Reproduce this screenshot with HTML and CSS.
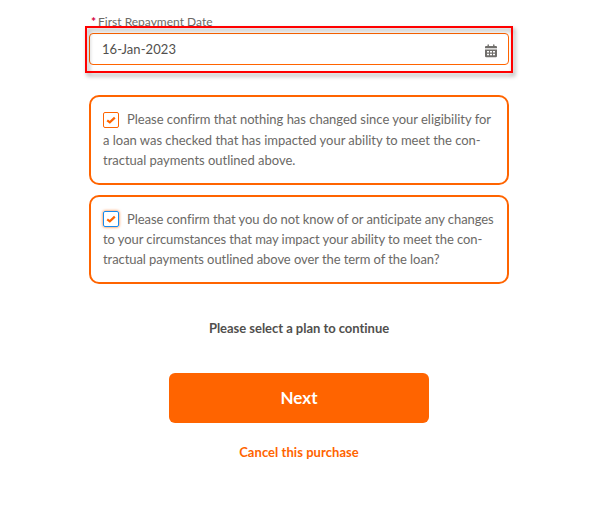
FILE: index.html
```html
<!DOCTYPE html>
<html lang="en">
<head>
<meta charset="utf-8">
<title>Loan confirmation</title>
<link rel="stylesheet" href="styles.css">
</head>
<body>
<main class="form">
  <div class="field">
    <label class="field-label" for="date"><span class="required">*</span><span>First Repayment Date</span></label>
    <div class="date-input" id="date">
      <span>16-Jan-2023</span>
      <svg class="calendar" width="12" height="14" viewBox="0 0 12 14">
        <path fill="#706e6b" d="M1 2h1.500v-1q0-.7.7-.7t.7.700v1h4.200v-1q0-.7.7-.7t.7.700v1H11q1 0 1 1v1.200H0V3q0-1 1-1zM0 5.400h12v6.600q0 1.200-1.200 1.200H1.200Q0 13.200 0 12z"/>
        <path fill="#fff" d="M2 7h2v1.500H2zM5 7h2v1.500H5zM8 7h2v1.500H8zM2 9.800h2v1.500H2zM5 9.800h2v1.500H5zM8 9.800h2v1.500H8z"/>
      </svg>
    </div>
    <div class="highlight"></div>
  </div>

  <label class="card card-first">
    <span class="line"><span class="box"><svg width="10" height="8" viewBox="0 0 10 8"><path d="M1.200 4.300 3.800 6.300 8.800 1.600" fill="none" stroke="#ff6400" stroke-width="2.200"/></svg></span><span>Please confirm that nothing has changed since your eligibility for</span></span>
    <span class="line"><span>a loan was checked that has impacted your ability to meet the con-</span></span>
    <span class="line"><span>tractual payments outlined above.</span></span>
  </label>

  <label class="card card-second">
    <span class="line"><span class="box focused"><svg width="10" height="8" viewBox="0 0 10 8"><path d="M1.200 4.300 3.800 6.300 8.800 1.600" fill="none" stroke="#ff6400" stroke-width="2.200"/></svg></span><span>Please confirm that you do not know of or anticipate any changes</span></span>
    <span class="line"><span>to your circumstances that may impact your ability to meet the con-</span></span>
    <span class="line"><span>tractual payments outlined above over the term of the loan?</span></span>
  </label>

  <p class="prompt">Please select a plan to continue</p>
  <button class="next" type="button">Next</button>
  <a class="cancel">Cancel this purchase</a>
</main>
</body>
</html>
```
FILE: styles.css
```css
* { box-sizing: border-box; }
body {
  margin: 0;
  background: #fff;
  font: 13px/20px Lato, sans-serif;
  font-variant-ligatures: none;
  color: #6b6966;
}
.form {
  display: flex;
  flex-direction: column;
  width: 420px;
  margin-left: 89px;
  padding-top: 12px;
}
.field { position: relative; }
.field-label {
  display: flex;
  gap: 2px;
  height: 21px;
  padding-left: 2px;
  font-size: 12px;
  line-height: 20px;
}
.required {
  color: #d6003c;
  font-weight: 700;
}
.date-input {
  display: flex;
  align-items: center;
  justify-content: space-between;
  height: 32px;
  padding: 0 11px 0 12px;
  border: 1px solid #ff6400;
  border-radius: 4px;
  background: #fff;
  font-size: 13px;
  letter-spacing: .08px;
  color: #514f4d;
}
.calendar { margin-top: 3px; }
.highlight {
  position: absolute;
  left: -4px;
  right: -4px;
  top: 14px;
  height: 47px;
  border: 2px solid #f00;
  filter: drop-shadow(2px 3px 2px rgba(0, 0, 0, .4));
}
.card {
  border: 2px solid #ff6400;
  border-radius: 10px;
  padding: 12px;
}
.card-first {
  height: 90px;
  margin-top: 30px;
  padding-top: 11px;
  letter-spacing: -.02px;
}
.card-second {
  height: 89px;
  margin-top: 10px;
  letter-spacing: -.07px;
}
.line {
  display: flex;
  align-items: center;
  height: 20px;
  white-space: nowrap;
}
.card-first .line:first-child { height: 22px; }
.box {
  display: flex;
  flex: none;
  align-items: center;
  justify-content: center;
  width: 16px;
  height: 16px;
  margin-right: 8px;
  border: 1px solid #ff6400;
  border-radius: 2px;
}
.card-first .box { margin-top: 2px; }
.focused {
  border-color: #1589ee;
  box-shadow: 0 0 3px #ff6400;
}
.prompt {
  margin: 34px 0 0;
  text-align: center;
  font-weight: 700;
  letter-spacing: -.03px;
  color: #514f4d;
}
.next {
  align-self: center;
  width: 260px;
  height: 50px;
  margin-top: 35px;
  border: 0;
  border-radius: 6px;
  background: #ff6400;
  color: #fff;
  font: 700 17px/20px Lato, sans-serif;
}
.cancel {
  margin-top: 19px;
  text-align: center;
  font-weight: 700;
  letter-spacing: .05px;
  color: #ff6400;
}
```
